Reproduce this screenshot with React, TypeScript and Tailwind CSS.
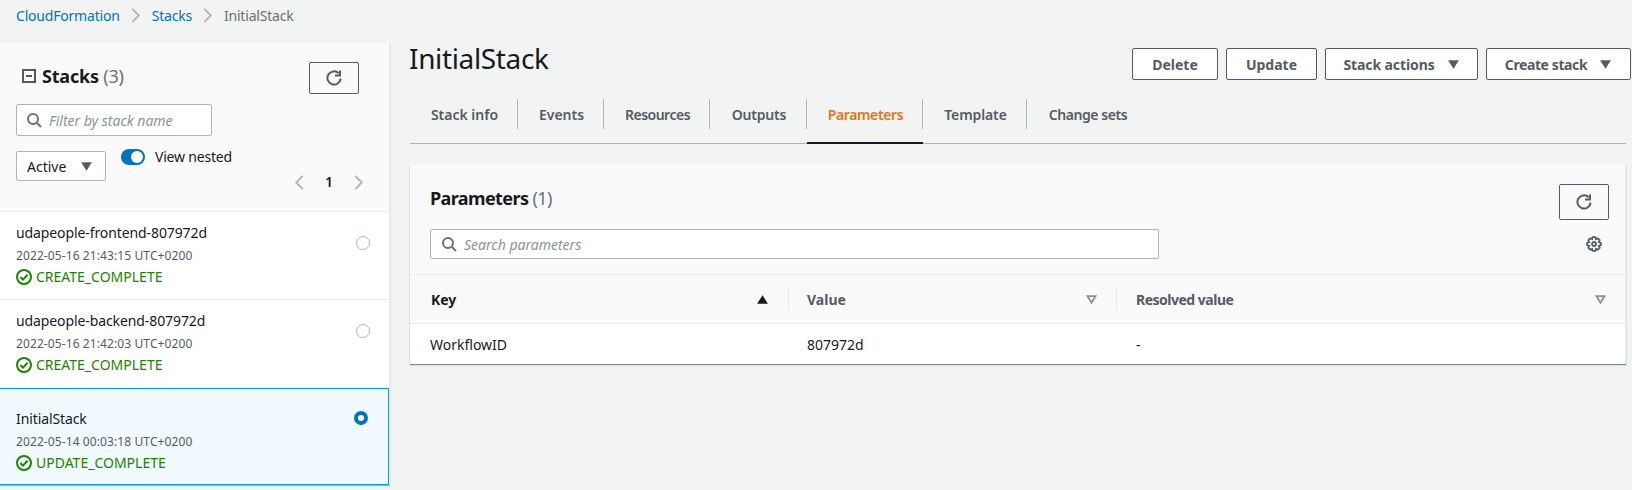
import React from "react";

const font = { fontFamily: '"Noto Sans", "Open Sans", sans-serif' };

function Refresh({ className = "" }: { className?: string }) {
  return (
    <svg viewBox="0 0 16 16" className={className} fill="none" stroke="#545b64" strokeWidth="2">
      <path d="M14.6 8.6A6.6 6.6 0 1 1 12.6 3.2" />
      <path d="M14 .6v5H9" />
    </svg>
  );
}

function Search() {
  return (
    <svg viewBox="0 0 16 16" className="w-4 h-4 shrink-0" fill="none" stroke="#687078" strokeWidth="2">
      <circle cx="7" cy="7" r="5" />
      <path d="M11 11l4 4" />
    </svg>
  );
}

function Caret({ className = "" }: { className?: string }) {
  return (
    <svg viewBox="0 0 12 10" className={className}>
      <path d="M1 1h10L6 9z" fill="#545b64" />
    </svg>
  );
}

function Hollow() {
  return (
    <svg viewBox="0 0 12 10" className="w-[11px] h-[9px]">
      <path d="M1.5 1.2h9L6 8.6z" fill="none" stroke="#879596" strokeWidth="2" />
    </svg>
  );
}

function Chevron({ left = false }: { left?: boolean }) {
  return (
    <svg viewBox="0 0 12 16" className="w-[12px] h-[15px]" fill="none" stroke="#aab7b8" strokeWidth="2">
      <path d={left ? "M10 1L3 8l7 7" : "M2 1l7 7-7 7"} />
    </svg>
  );
}

function Check() {
  return (
    <svg viewBox="0 0 16 16" className="w-4 h-4 shrink-0" fill="none" stroke="#1d8102" strokeWidth="2">
      <circle cx="8" cy="8" r="7" />
      <path d="M4.4 8l2.6 2.6 4.6-4.8" />
    </svg>
  );
}

function Gear() {
  return (
    <svg viewBox="0 0 16 16" className="w-4 h-4" fill="none" stroke="#545b64" strokeWidth="1.8">
      <circle cx="8" cy="8" r="2" />
      <path d="M6.6 1.2h2.8l.5 2 1.8-.9 2 2-.9 1.8 2 .5v2.8l-2 .5.9 1.8-2 2-1.8-.9-.5 2H6.6l-.5-2-1.8.9-2-2 .9-1.8-2-.5V6.6l2-.5-.9-1.8 2-2 1.8.9z" />
    </svg>
  );
}

function Item({ name, date, status, selected, last }: { name: string; date: string; status: string; selected?: boolean; last?: boolean }) {
  return (
    <div
      className={
        selected
          ? "flex items-start justify-between h-[97px] pl-4 pr-[20px] pt-[20px] bg-[#f1faff] border border-[#00a1c9] border-l-0"
          : `flex items-start justify-between h-[88px] pl-4 pr-[19px] pt-[11px] bg-white ${last ? "" : "border-b border-[#eaeded]"}`
      }
    >
      <div>
        <div className="text-[14px] leading-[20px] text-[#16191f] tracking-[-0.1px]">{name}</div>
        <div className="text-[12px] leading-[16px] text-[#545b64] mt-[5px] tracking-[0.1px]">{date}</div>
        <div className="flex items-center gap-[4px] text-[14px] leading-[20px] text-[#1d8102] mt-[3px]">
          <Check />
          <span>{status}</span>
        </div>
      </div>
      {selected ? (
        <div className="w-[14px] h-[14px] rounded-full border-[4px] border-[#0073bb] bg-white mt-[2px]" />
      ) : (
        <div className="w-[14px] h-[14px] rounded-full border-[1px] border-[#aab7b8] bg-white mt-[13px]" />
      )}
    </div>
  );
}

function Btn({ children, w, track = "" }: { children: React.ReactNode; w: string; track?: string }) {
  return (
    <div className={`${w} ${track} h-[32px] flex items-center justify-center gap-[12px] bg-white border border-[#545b64] rounded-[2px] text-[14px] font-bold text-[#545b64]`}>
      {children}
    </div>
  );
}

function Tab({ label, w, track = "", active, last }: { label: string; w: string; track?: string; active?: boolean; last?: boolean }) {
  return (
    <div className={`${w} h-[45px] -mb-px ${active ? "border-b-[2px] border-[#16191f]" : ""}`}>
      <div className={`h-[30px] pl-[2px] flex items-center justify-center text-[14px] font-semibold ${track} ${active ? "text-[#ec7211]" : "text-[#545b64]"} ${last ? "" : "border-r border-[#aab7b8]"}`}>
        {label}
      </div>
    </div>
  );
}

export default function App() {
  return (
    <div className="w-[1632px] h-[490px] bg-[#f2f3f3] overflow-hidden" style={font}>
      <div className="h-[43px] pl-4 flex items-center pb-[13px] text-[14px] tracking-[-0.2px]">
        <span className="text-[#0073bb]">CloudFormation</span>
        <span className="mx-[10px]"><Chevron /></span>
        <span className="text-[#0073bb]">Stacks</span>
        <span className="mx-[10px]"><Chevron /></span>
        <span className="text-[#687078]">InitialStack</span>
      </div>
      <div className="flex items-start">
        <aside className="w-[390px] shrink-0 bg-white border-r border-[#eaeded] shadow-[0_1px_1px_rgba(0,28,36,0.3)]">
          <div className="h-[169px] bg-[#fafafa] border-b border-[#eaeded] pl-4 pr-[30px] pt-[19px]">
            <div className="flex justify-between items-start">
              <div className="flex items-center pl-[6px] pt-[3px] gap-[6px]">
                <div className="w-[14px] h-[14px] border-[2px] border-[#545b64] flex items-center justify-center">
                  <div className="w-[6px] h-[2px] bg-[#545b64]" />
                </div>
                <div className="text-[18px] leading-[22px] font-bold text-[#16191f] tracking-[-0.2px]">
                  Stacks <span className="font-normal text-[#687078]">(3)</span>
                </div>
              </div>
              <div className="w-[50px] h-[32px] bg-[#fafafa] border border-[#545b64] rounded-[2px] flex items-center justify-center">
                <Refresh className="w-4 h-4" />
              </div>
            </div>
            <div className="w-[196px] h-[32px] mt-[10px] bg-white border border-[#aab7b8] rounded-[2px] flex items-center px-[9px] gap-[7px]">
              <Search />
              <span className="text-[14px] italic text-[#879596]">Filter by stack name</span>
            </div>
            <div className="flex items-start mt-[13px]">
              <div className="w-[90px] h-[30px] mt-[2px] bg-white border border-[#aab7b8] rounded-[2px] flex items-center justify-between pl-[10px] pr-[12px] text-[14px] text-[#16191f]">
                <span>Active</span>
                <Caret className="w-[13px] h-[11px]" />
              </div>
              <div className="ml-[15px] flex items-center gap-[10px]">
                <div className="w-[24px] h-[16px] rounded-full bg-[#0073bb] flex items-center justify-end pr-[2px]">
                  <div className="w-[12px] h-[12px] rounded-full bg-white" />
                </div>
                <span className="text-[14px] leading-[16px] text-[#16191f] tracking-[-0.2px]">View nested</span>
              </div>
            </div>
            <div className="flex justify-end items-center gap-[20px] -mt-[8px] -mr-[6px]">
              <Chevron left />
              <span className="text-[14px] leading-[18px] font-semibold text-[#16191f]">1</span>
              <Chevron />
            </div>
          </div>
          <Item name="udapeople-frontend-807972d" date="2022-05-16 21:43:15 UTC+0200" status="CREATE_COMPLETE" />
          <Item name="udapeople-backend-807972d" date="2022-05-16 21:42:03 UTC+0200" status="CREATE_COMPLETE" last />
          <Item name="InitialStack" date="2022-05-14 00:03:18 UTC+0200" status="UPDATE_COMPLETE" selected />
        </aside>
        <main className="w-[1216px] ml-[20px] -mt-[4px]">
          <div className="flex items-start justify-between -mr-[5px]">
            <h1 className="text-[28px] leading-[36px] text-[#16191f] -ml-px mt-[1px] tracking-[-0.35px]">InitialStack</h1>
            <div className="flex gap-[8px] mt-[9px]">
              <Btn w="w-[86px]">Delete</Btn>
              <Btn w="w-[91px]">Update</Btn>
              <Btn w="w-[153px]" track="tracking-[-0.1px]">Stack actions <Caret className="w-[13px] h-[11px]" /></Btn>
              <Btn w="w-[145px]" track="tracking-[-0.4px]">Create stack <Caret className="w-[13px] h-[11px]" /></Btn>
            </div>
          </div>
          <div className="flex border-b border-[#aab7b8] mt-[19px] h-[45px]">
            <Tab label="Stack info" w="w-[108px]" />
            <Tab label="Events" w="w-[86px]" />
            <Tab label="Resources" w="w-[106px]" track="tracking-[-0.5px]" />
            <Tab label="Outputs" w="w-[97px]" track="tracking-[-0.2px]" />
            <Tab label="Parameters" w="w-[116px]" track="tracking-[-0.4px]" active />
            <Tab label="Template" w="w-[104px]" track="tracking-[-0.1px]" />
            <Tab label="Change sets" w="w-[120px]" track="tracking-[-0.45px]" last />
          </div>
          <section className="mt-[21px] bg-white border-r border-[#eaeded] shadow-[0_1px_1px_rgba(0,28,36,0.5)]">
            <div className="h-[110px] bg-[#fafafa] border-b border-[#eaeded] pl-[20px] pr-[16px] pt-[19px]">
              <div className="flex justify-between">
                <div className="text-[18px] leading-[22px] font-bold text-[#16191f] mt-[3px] tracking-[-0.6px]">
                  Parameters <span className="font-normal text-[#687078]">(1)</span>
                </div>
                <div className="w-[50px] h-[36px] bg-[#fafafa] border border-[#545b64] rounded-[2px] flex items-center justify-center">
                  <Refresh className="w-4 h-4" />
                </div>
              </div>
              <div className="flex justify-between items-center mt-[9px]">
                <div className="w-[729px] h-[30px] bg-white border border-[#aab7b8] rounded-[2px] flex items-center px-[10px] gap-[7px]">
                  <Search />
                  <span className="text-[14px] italic text-[#879596]">Search parameters</span>
                </div>
                <div className="mr-[7px]"><Gear /></div>
              </div>
            </div>
            <div className="flex h-[49px] bg-[#fafafa] border-b border-[#eaeded] items-center text-[14px] font-bold">
              <div className="w-[379px] h-[24px] flex items-center justify-between pl-[21px] pr-[19px] border-r border-[#eaeded] text-[#16191f]">
                <span>Key</span>
                <svg viewBox="0 0 12 10" className="w-[13px] h-[11px]"><path d="M6 1l5 8H1z" fill="#16191f" /></svg>
              </div>
              <div className="w-[328px] h-[24px] flex items-center justify-between pl-[18px] pr-[19px] border-r border-[#eaeded] text-[#545b64]">
                <span>Value</span>
                <Hollow />
              </div>
              <div className="flex-1 h-[24px] flex items-center justify-between pl-[19px] pr-[19px] text-[#545b64]">
                <span className="tracking-[-0.5px]">Resolved value</span>
                <Hollow />
              </div>
            </div>
            <div className="flex h-[40px] items-center text-[14px] text-[#16191f]">
              <div className="w-[379px] pl-[20px]">WorkflowID</div>
              <div className="w-[328px] pl-[18px]">807972d</div>
              <div className="pl-[19px]">-</div>
            </div>
          </section>
        </main>
      </div>
    </div>
  );
}
